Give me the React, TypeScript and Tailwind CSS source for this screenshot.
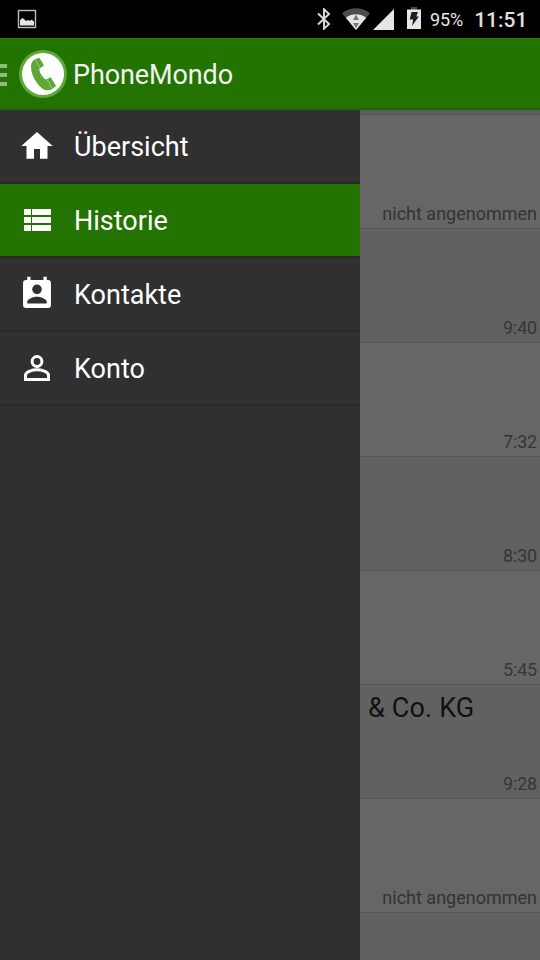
import React from 'react';

const calls = [
  { name: '', time: '', note: 'nicht angenommen' },
  { name: '', time: '9:40', note: '' },
  { name: '', time: '7:32', note: '' },
  { name: '', time: '8:30', note: '' },
  { name: '', time: '5:45', note: '' },
  { name: '& Co. KG', time: '9:28', note: '' },
  { name: '', time: '', note: 'nicht angenommen' },
  { name: '', time: '', note: '' },
];

export default function App() {
  return (
    <div className="flex h-[960px] w-[540px] flex-col overflow-hidden bg-[#303030] font-['Roboto','Noto_Sans',sans-serif] text-white">
      <StatusBar />

      <header className="flex h-[72px] shrink-0 items-center border-t border-b-2 border-t-[#2b7a0b] border-b-[#206900] bg-[#227300]">
        <div className="flex w-[7px] flex-col gap-[5px] pt-[3px]">
          <span className="h-1 bg-[#90b980]" />
          <span className="h-1 bg-[#90b980]" />
          <span className="h-1 bg-[#90b980]" />
        </div>
        <Logo />
        <h1 className="ml-[6px] pt-[2px] text-[27px] leading-8 tracking-[-0.1px] text-[#f3f3f3]">PhoneMondo</h1>
      </header>

      <div className="flex min-h-0 flex-1">
        <nav className="w-[360px] shrink-0 bg-[#303030]">
          <MenuItem icon={<HomeIcon />} label="Übersicht" />
          <MenuItem icon={<ListIcon />} label="Historie" active />
          <MenuItem icon={<ContactsIcon />} label="Kontakte" />
          <MenuItem icon={<PersonIcon />} label="Konto" />
        </nav>

        <main className="flex-1 overflow-hidden bg-[#666666]">
          <div className="h-[5px] border-b border-[#535353] bg-[#5e5e5e]" />
          {calls.map((call, i) => (
            <CallRow key={i} name={call.name} time={call.time} note={call.note} odd={i % 2 === 1} />
          ))}
        </main>
      </div>
    </div>
  );
}

function MenuItem({ icon, label, active }: { icon: React.ReactNode; label: string; active?: boolean }) {
  return (
    <div className={`flex h-[74px] items-center border-b-2 border-[#282828] pl-[19px] ${active ? 'bg-[#227300]' : 'bg-[#303030]'}`}>
      {icon}
      <span className="ml-[19px] pt-[2px] text-[27px] leading-8 text-white">{label}</span>
    </div>
  );
}

function CallRow({ name, time, note, odd }: { name: string; time: string; note: string; odd: boolean }) {
  return (
    <div className={`flex h-[114px] flex-col justify-between border-b border-[#575757] pr-[3px] pl-2 ${odd ? 'bg-[#616161]' : 'bg-[#666666]'}`}>
      <span className="mt-[7px] h-8 text-[27px] leading-8 tracking-[0.15px] text-[#111111]">{name}</span>
      {time ? (
        <span className="mb-1 h-[21px] text-right text-[18px] leading-[21px] tracking-[-0.2px] text-[#363636]">{time}</span>
      ) : (
        <span className="mb-1 h-[21px] text-right text-[18px] leading-[21px] text-[#333333]">{note}</span>
      )}
    </div>
  );
}

function StatusBar() {
  return (
    <div className="flex h-[38px] shrink-0 items-center bg-black">
      {/* screenshot notification */}
      <svg className="ml-[17px] h-5 w-5" viewBox="0 0 20 20">
        <rect x="1.5" y="1.5" width="17" height="17" fill="none" stroke="#bdbdbd" strokeWidth="1.4" />
        <path d="M3 16.500v-5l2-2.500 2 1 2 2 2-1 1.500 1 2-1.200 2.500 1.700v4z" fill="#e4e4e4" />
      </svg>

      <svg className="ml-[279px] h-[22px] w-4" viewBox="0 0 16 22">
        <path d="M2 5.500l11 10.500-5 4.700V1.300l5 4.700L2 16.500" fill="none" stroke="#d6d6d6" strokeWidth="2" />
      </svg>

      {/* wifi with transfer arrows */}
      <svg className="ml-[10px] h-[22px] w-[28px]" viewBox="0 0 28 22">
        <path d="M0 5.200C8-1.300 20-1.300 28 5.200L14 22z" fill="#4c4c4c" />
        <path d="M3.800 9.700C10 5.200 18 5.200 24.200 9.700L14 22z" fill="#e6e6e6" />
        <path d="M14 6.500l3 5.500h-6zM11 15h6l-3 5z" fill="#777777" />
      </svg>

      <svg className="ml-[3px] h-[21px] w-[21px]" viewBox="0 0 21 21">
        <path d="M21 0v21H0z" fill="#e6e6e6" />
      </svg>

      {/* charging battery */}
      <svg className="-mt-[2px] ml-[13px] h-[22px] w-[14px]" viewBox="0 0 14 22">
        <path d="M4 0h6v3H4z" fill="#4c4c4c" />
        <path d="M0 2.500h14V22H0z" fill="#e6e6e6" />
        <path d="M4.500 5h6.500L9.300 9.500h2.500L5 19l1.200-6.500H2.700z" fill="#1c1c24" />
      </svg>

      <span className="ml-[9px] pt-px text-[18px] leading-5 tracking-[-0.1px] text-[#e6e6e6]">95%</span>
      <span className="ml-[11px] pt-px text-[21px] leading-6 font-medium text-[#e0e0e0]">11:51</span>
    </div>
  );
}

function Logo() {
  return (
    <svg className="ml-3 h-12 w-12" viewBox="0 0 48 48">
      <circle cx="24" cy="24" r="24" fill="#5fa838" />
      <circle cx="24" cy="24" r="21" fill="#ffffff" />
      <path
        d="M12 16.500c0-3.500 1.500-6 4.200-7.200L20.500 7.800 25 15.500l-4.700 3.200c-.1 4 3.300 8.700 6.500 10.800l5-2.200 5.300 8.700-4.500 3.500c-4 1.500-8.300.8-11-2.600C15.500 31.500 12 23 12 16.500z"
        fill="#5fa838"
      />
      <path d="M16.300 9.600l4.600 8.200M28 29.400l5.200 9.200" stroke="#a6d090" strokeWidth="0.8" />
    </svg>
  );
}

function HomeIcon() {
  return (
    <svg className="h-9 w-9 shrink-0" viewBox="0 0 24 24" fill="#ffffff">
      <path d="M10 20.500v-6.500h4v6.500h5V12h3.500L12 2.700 1.500 12H5v8.500z" />
    </svg>
  );
}

function ListIcon() {
  return (
    <svg className="h-9 w-9 shrink-0" viewBox="0 0 36 36" fill="#ffffff">
      <path d="M5 7h7v6H5zM13 7h19v6H13zM5 15h7v6H5zM13 15h19v6H13zM5 23h7v6H5zM13 23h19v6H13z" />
    </svg>
  );
}

function ContactsIcon() {
  return (
    <svg className="h-9 w-9 shrink-0" viewBox="0 0 24 24" fill="#ffffff">
      <path d="M19.300 2.700H18.500V.5h-2.200v2.200H7.700V.5H5.500v2.200H4.700a2 2 0 0 0-2 2v14.600a2 2 0 0 0 2 2h14.600a2 2 0 0 0 2-2V4.700a2 2 0 0 0-2-2zM12 5.700a3.200 3.200 0 1 1 0 6.400 3.200 3.200 0 0 1 0-6.400zm6.500 12.600h-13v-1c0-2.200 4.300-3.500 6.500-3.500s6.500 1.300 6.500 3.500z" />
    </svg>
  );
}

function PersonIcon() {
  return (
    <svg className="h-9 w-9 shrink-0" viewBox="0 0 36 36" fill="none" stroke="#ffffff" strokeWidth="3">
      <circle cx="18" cy="11.500" r="4.900" />
      <path d="M6.500 29.500v-4.200c0-3.700 7.500-5.500 11.500-5.500s11.500 1.800 11.500 5.500v4.200z" />
    </svg>
  );
}
